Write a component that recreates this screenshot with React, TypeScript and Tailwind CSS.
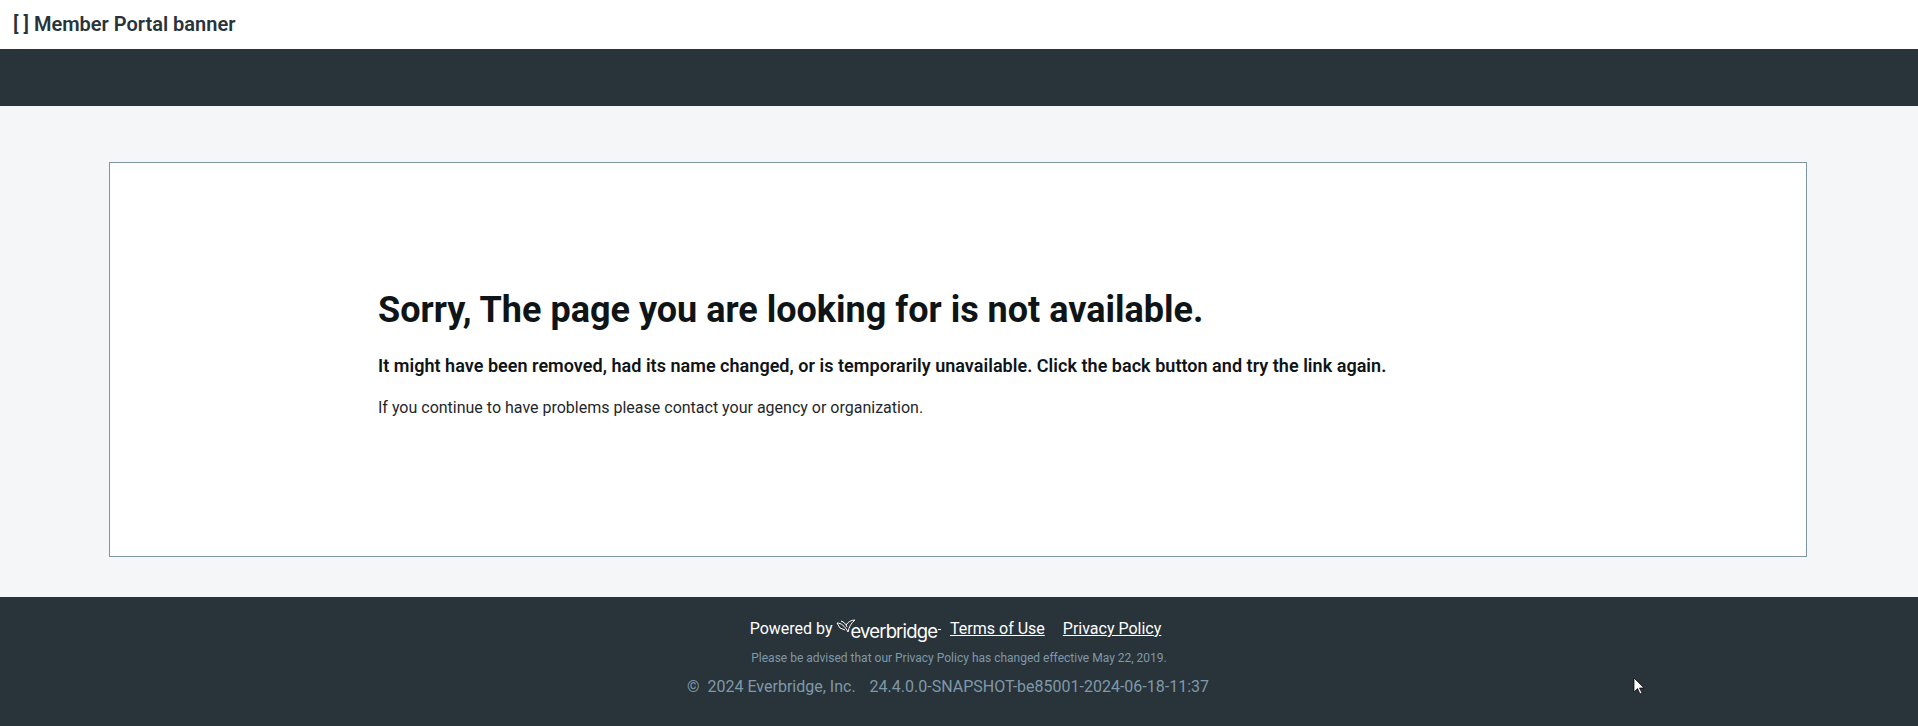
const roboto = "font-['Roboto',sans-serif]";

const EverbridgeLogo = () => (
  <span className="inline-flex items-end">
    <svg width="20" height="16" viewBox="0 0 20 16" fill="none" stroke="#fff" strokeWidth="1" className="mb-[7px] mr-[-5px]">
      <path d="M1 4 C5 4 9 7 12 13 C13 8 15 4 19 1 C15 1 12 3 10 6" />
      <path d="M1 4 L4 9 L9 11" />
      <path d="M5 2 C8 3 10 5 11 8" />
    </svg>
    <span className="font-['Inter',sans-serif] text-[18.5px] leading-[22px] tracking-[-0.85px] text-white">everbridge</span>
    <span className="mb-[12px] ml-[1px] h-px w-[3px] bg-white" />
  </span>
);

const Cursor = () => (
  <svg width="12" height="18" viewBox="0 0 12 18" className="absolute left-[1633px] top-[677px]">
    <path d="M1 1 L1 15 L4.5 11.5 L7 17 L9 16 L6.5 11 L11 11 Z" fill="#fff" stroke="#000" strokeWidth="0.7" />
  </svg>
);

export default function App() {
  return (
    <div className={`${roboto} relative flex h-[726px] flex-col overflow-hidden bg-[#f5f6f8]`}>
      <header className="flex h-[49px] items-center bg-white pb-[1px] pl-[13px] text-[20px] font-semibold text-[#29333a]">
        [ ] Member Portal banner
      </header>
      <nav className="h-[57px] bg-[#29333a]" />

      <main className="flex-1 pl-[109px] pr-[111px] pt-[56px]">
        <section className="flex h-[395px] flex-col border border-[#7f95a3] bg-white pl-[268px] pt-[126px]">
          <h1 className="text-[36px] leading-[42px] font-bold text-[#0f1416]">
            Sorry, The page you are looking for is not available.
          </h1>
          <p className="mt-[24px] text-[18px] leading-[22px] font-semibold tracking-[0.03px] text-[#0f1416]">
            It might have been removed, had its name changed, or is temporarily unavailable. Click the back button and try the link again.
          </p>
          <p className="mt-[21px] text-[16px] leading-[20px] text-[#1f272c]">
            If you continue to have problems please contact your agency or organization.
          </p>
        </section>
      </main>

      <footer className="flex h-[129px] flex-col items-center bg-[#29333a] pt-[19px]">
        <div className="mr-[7px] flex h-[26px] items-center text-[16px] text-white">
          <span>Powered by</span>
          <span className="ml-[3px] mt-[2px]"><EverbridgeLogo /></span>
          <a className="ml-[9px] underline">Terms of Use</a>
          <a className="ml-[18px] underline">Privacy Policy</a>
        </div>
        <p className="mt-[8px] text-[12px] leading-[16px] text-[#7f99a8]">
          Please be advised that our Privacy Policy has changed effective May 22, 2019.
        </p>
        <p className="mr-[22px] mt-[11px] flex gap-[14px] text-[16px] leading-[20px] text-[#7f99a8]">
          <span className="whitespace-pre">©  2024 Everbridge, Inc.</span>
          <span>24.4.0.0-SNAPSHOT-be85001-2024-06-18-11:37</span>
        </p>
      </footer>
      <Cursor />
    </div>
  );
}
